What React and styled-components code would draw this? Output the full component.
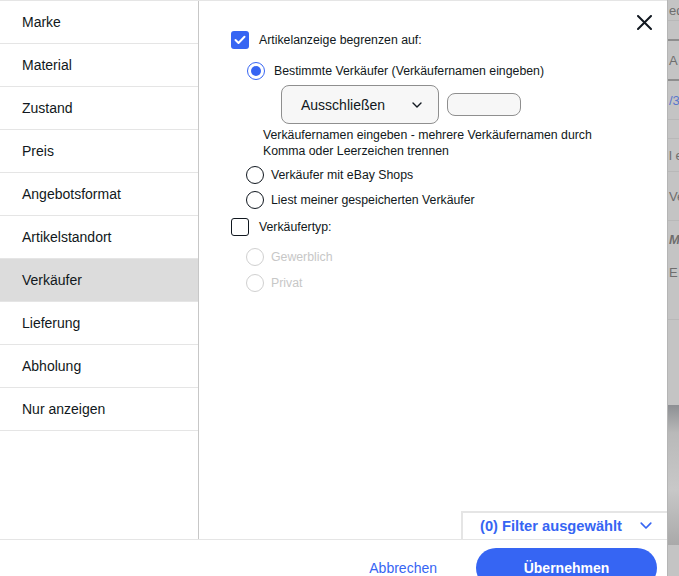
import React from "react";
import styled, { createGlobalStyle } from "styled-components";

const GlobalStyle = createGlobalStyle`
  html, body {
    margin: 0;
    padding: 0;
    background: #c4c4c4;
  }
  body {
    font-family: "Liberation Sans", Arial, sans-serif;
    color: #111820;
  }
`;

const Page = styled.div`
  display: flex;
  width: 679px;
  height: 576px;
  overflow: hidden;
`;

const Modal = styled.div`
  display: flex;
  flex-direction: column;
  width: 667px;
  flex-shrink: 0;
  background: #fff;
  border-top: 1px solid #e5e5e5;
  box-sizing: border-box;
`;

const Body = styled.div`
  display: flex;
  height: 538px;
`;

const Sidebar = styled.nav`
  width: 198px;
  flex-shrink: 0;
  border-right: 1px solid #c7c7c7;
`;

const NavItem = styled.div`
  height: 42px;
  display: flex;
  align-items: center;
  padding-left: 22px;
  font-size: 14px;
  color: #111820;
  border-bottom: 1px solid #e5e5e5;
  background: ${(p) => (p.$active ? "#dcdcdc" : "#fff")};
`;

const Content = styled.div`
  position: relative;
  flex: 1;
  display: flex;
  flex-direction: column;
  padding: 30px 0 0 32px;
`;

const CloseButton = styled.button`
  position: absolute;
  top: 12px;
  right: 14px;
  width: 18px;
  height: 18px;
  padding: 0;
  border: 0;
  background: none;
  display: flex;
  align-items: center;
  justify-content: center;
`;

const Row = styled.label`
  display: flex;
  align-items: center;
  gap: ${(p) => p.$gap || 10}px;
  margin-top: ${(p) => p.$mt || 0}px;
  margin-left: ${(p) => p.$ml || 0}px;
  font-size: 12.3px;
  color: ${(p) => (p.$disabled ? "#c7c7c7" : "#111820")};
`;

const Box = styled.span`
  width: 18px;
  height: 18px;
  box-sizing: border-box;
  border-radius: 3px;
  display: flex;
  align-items: center;
  justify-content: center;
  background: ${(p) => (p.$checked ? "#3665f3" : "#fff")};
  border: ${(p) => (p.$checked ? "none" : "1.5px solid #111820")};
`;

const Radio = styled.span`
  width: 18px;
  height: 18px;
  box-sizing: border-box;
  border-radius: 50%;
  display: flex;
  align-items: center;
  justify-content: center;
  border: 1.5px solid
    ${(p) => (p.$checked ? "#3665f3" : p.$disabled ? "#d0d0d0" : "#111820")};
  &::after {
    content: "";
    width: 10px;
    height: 10px;
    border-radius: 50%;
    background: ${(p) => (p.$checked ? "#3665f3" : "transparent")};
  }
`;

const SelectRow = styled.div`
  display: flex;
  align-items: center;
  gap: 8px;
  margin: 5px 0 0 50px;
`;

const Select = styled.div`
  width: 158px;
  height: 39px;
  box-sizing: border-box;
  border: 1px solid #8f8f8f;
  border-radius: 8px;
  background: #f7f7f7;
  display: flex;
  align-items: center;
  justify-content: space-between;
  padding: 0 16px 0 19px;
  font-size: 14px;
  color: #111820;
`;

const TextInput = styled.div`
  width: 74px;
  height: 23px;
  box-sizing: border-box;
  border: 1px solid #8f8f8f;
  border-radius: 8px;
  background: #f7f7f7;
`;

const Hint = styled.p`
  margin: 3px 0 0 32px;
  font-size: 12.3px;
  line-height: 16px;
  color: #111820;
  width: 345px;
`;

const Summary = styled.div`
  margin-top: auto;
  align-self: flex-end;
  width: 206px;
  height: 28px;
  box-sizing: border-box;
  border-top: 2px solid #e5e5e5;
  border-left: 2px solid #e5e5e5;
  display: flex;
  align-items: center;
  justify-content: space-between;
  padding: 0 15px 0 17px;
  font-size: 14.7px;
  font-weight: 700;
  color: #3665f3;
`;

const Footer = styled.footer`
  display: flex;
  align-items: flex-start;
  justify-content: flex-end;
  gap: 39px;
  border-top: 1px solid #e5e5e5;
  padding: 8px 10px 0 0;
  height: 37px;
  box-sizing: border-box;
  overflow: hidden;
`;

const LinkButton = styled.button`
  border: 0;
  background: none;
  padding: 0;
  margin-top: 12px;
  font-family: inherit;
  font-size: 14px;
  color: #3665f3;
`;

const PrimaryButton = styled.button`
  width: 181px;
  height: 40px;
  flex-shrink: 0;
  border: 0;
  border-radius: 20px;
  background: #3665f3;
  color: #fff;
  font-family: inherit;
  font-size: 14px;
  font-weight: 700;
  padding: 0;
`;

const Backdrop = styled.div`
  flex: 1;
  border-left: 1px solid #b5b5b5;
  background: #c4c4c4;
  display: flex;
  flex-direction: column;
  overflow: hidden;
  white-space: nowrap;
  font-size: 13px;
  color: #6e6e6e;
`;

const BgRow = styled.div`
  height: ${(p) => p.$h}px;
  display: flex;
  align-items: center;
  padding-left: 1px;
  border-bottom: ${(p) => p.$line || "1px solid #b8b8b8"};
  color: ${(p) => p.$color || "#6e6e6e"};
  font-weight: ${(p) => (p.$bold ? 700 : 400)};
  font-style: ${(p) => (p.$bold ? "italic" : "normal")};
`;

const BgPhoto = styled.div`
  margin-top: 85px;
  height: 140px;
  background: linear-gradient(180deg, #8d8f93 0%, #b9b9b9 20%, #c8c8c8 60%, #a9a9a9 100%);
`;

const Check = () => (
  <svg width="12" height="10" viewBox="0 0 12 10" fill="none">
    <path d="M1.5 5 L4.5 8 L10.5 1.8" stroke="#fff" strokeWidth="2" strokeLinecap="round" strokeLinejoin="round" />
  </svg>
);

const Chevron = ({ color = "#111820", size = 10 }) => (
  <svg width={size} height={size * 0.6} viewBox="0 0 10 6" fill="none">
    <path d="M1 1 L5 5 L9 1" stroke={color} strokeWidth="1.4" strokeLinecap="round" strokeLinejoin="round" />
  </svg>
);

const navItems = [
  "Marke",
  "Material",
  "Zustand",
  "Preis",
  "Angebotsformat",
  "Artikelstandort",
  "Verkäufer",
  "Lieferung",
  "Abholung",
  "Nur anzeigen",
];

export default function App() {
  return (
    <>
      <GlobalStyle />
      <Page>
        <Modal>
          <Body>
            <Sidebar>
              {navItems.map((item) => (
                <NavItem key={item} $active={item === "Verkäufer"}>
                  {item}
                </NavItem>
              ))}
            </Sidebar>
            <Content>
              <CloseButton aria-label="Schließen">
                <svg width="15" height="15" viewBox="0 0 15 15">
                  <path d="M1 1 L14 14 M14 1 L1 14" stroke="#111820" strokeWidth="2" strokeLinecap="round" />
                </svg>
              </CloseButton>

              <Row>
                <Box $checked>
                  <Check />
                </Box>
                Artikelanzeige begrenzen auf:
              </Row>
              <Row $mt={13} $ml={16} $gap={9}>
                <Radio $checked />
                Bestimmte Verkäufer (Verkäufernamen eingeben)
              </Row>
              <SelectRow>
                <Select>
                  Ausschließen
                  <Chevron />
                </Select>
                <TextInput />
              </SelectRow>
              <Hint>
                Verkäufernamen eingeben - mehrere Verkäufernamen durch Komma oder Leerzeichen trennen
              </Hint>
              <Row $mt={7} $ml={15} $gap={7}>
                <Radio />
                Verkäufer mit eBay Shops
              </Row>
              <Row $mt={7} $ml={15} $gap={7}>
                <Radio />
                Liest meiner gespeicherten Verkäufer
              </Row>
              <Row $mt={9}>
                <Box />
                Verkäufertyp:
              </Row>
              <Row $mt={12} $ml={15} $gap={7} $disabled>
                <Radio $disabled />
                Gewerblich
              </Row>
              <Row $mt={8} $ml={15} $gap={7} $disabled>
                <Radio $disabled />
                Privat
              </Row>

              <Summary>
                (0) Filter ausgewählt
                <Chevron color="#3665f3" size={12} />
              </Summary>
            </Content>
          </Body>
          <Footer>
            <LinkButton>Abbrechen</LinkButton>
            <PrimaryButton>Übernehmen</PrimaryButton>
          </Footer>
        </Modal>
        <Backdrop>
          <BgRow $h={20}>ed</BgRow>
          <BgRow $h={18} $line="2px solid #8e8e8e" />
          <BgRow $h={38} $line="2px solid #8e8e8e">A</BgRow>
          <BgRow $h={38} $color="#5a77cc">/3</BgRow>
          <BgRow $h={18} />
          <BgRow $h={32}>l e</BgRow>
          <BgRow $h={48}>Ve</BgRow>
          <BgRow $h={36} $line="none" $bold>Ma</BgRow>
          <BgRow $h={30} $line="none">E</BgRow>
          <BgRow $h={32} />
          <BgPhoto />
        </Backdrop>
      </Page>
    </>
  );
}
